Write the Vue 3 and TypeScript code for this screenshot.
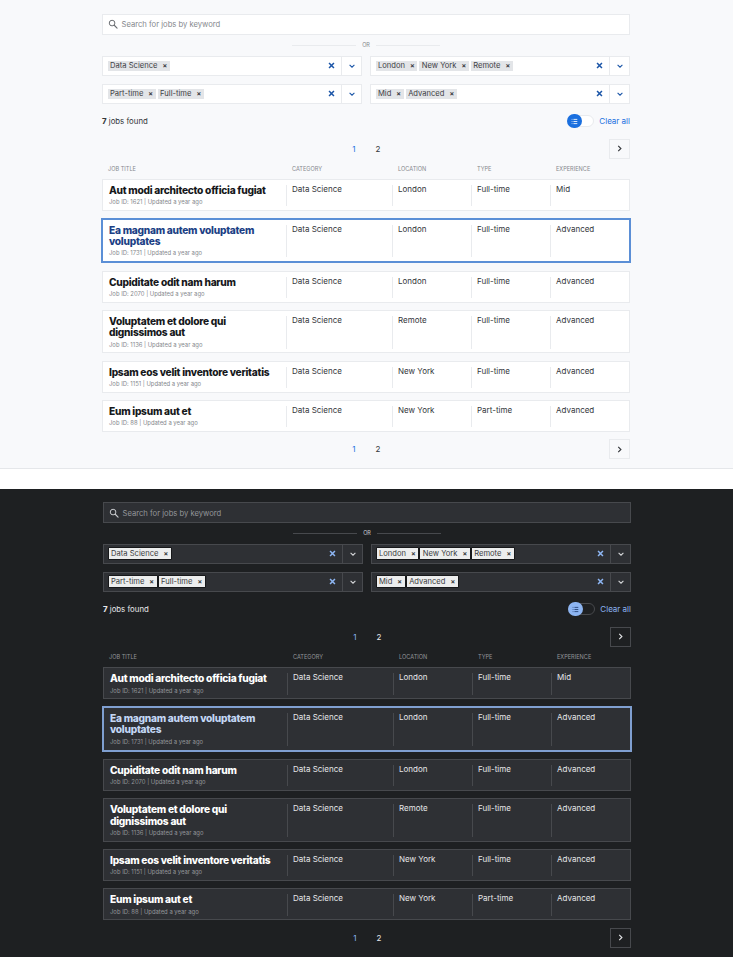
<script setup lang="ts">
interface Job {
  title: string
  id: number
  location: string
  type: string
  level: string
  selected?: boolean
}

const themes = ['light', 'dark']

const jobs: Job[] = [
  { title: 'Aut modi architecto officia fugiat', id: 1621, location: 'London', type: 'Full-time', level: 'Mid' },
  { title: 'Ea magnam autem voluptatem voluptates', id: 1731, location: 'London', type: 'Full-time', level: 'Advanced', selected: true },
  { title: 'Cupiditate odit nam harum', id: 2070, location: 'London', type: 'Full-time', level: 'Advanced' },
  { title: 'Voluptatem et dolore qui dignissimos aut', id: 1136, location: 'Remote', type: 'Full-time', level: 'Advanced' },
  { title: 'Ipsam eos velit inventore veritatis', id: 1151, location: 'New York', type: 'Full-time', level: 'Advanced' },
  { title: 'Eum ipsum aut et', id: 88, location: 'New York', type: 'Part-time', level: 'Advanced' },
]

const filters = [
  ['Data Science'],
  ['London', 'New York', 'Remote'],
  ['Part-time', 'Full-time'],
  ['Mid', 'Advanced'],
]
</script>

<template>
  <div class="page">
    <section v-for="theme in themes" :key="theme" class="panel" :class="theme">
      <div class="search">
        <svg class="search-icon" viewBox="0 0 16 16" width="10" height="10">
          <circle cx="6.5" cy="6.5" r="4.5" fill="none" stroke="currentColor" stroke-width="1.6" />
          <path d="M10 10l4.5 4.5" stroke="currentColor" stroke-width="1.8" stroke-linecap="round" />
        </svg>
        <span>Search for jobs by keyword</span>
      </div>

      <div class="or"><i></i><span>OR</span><i></i></div>

      <div class="filters">
        <div v-for="(tags, i) in filters" :key="i" class="select">
          <div class="tags">
            <span v-for="tag in tags" :key="tag" class="tag">{{ tag }}<b>×</b></span>
          </div>
          <svg class="clear" viewBox="0 0 10 10" width="7" height="7">
            <path d="M1.5 1.5l7 7M8.5 1.5l-7 7" stroke="currentColor" stroke-width="2.2" />
          </svg>
          <div class="caret">
            <svg viewBox="0 0 10 10" width="6" height="6">
              <path d="M1 3l4 4 4-4" fill="none" stroke="currentColor" stroke-width="1.8" />
            </svg>
          </div>
        </div>
      </div>

      <div class="summary">
        <span class="count"><strong>7</strong> jobs found</span>
        <div class="toggle">
          <span class="knob">
            <svg viewBox="0 0 10 10" width="7" height="7">
              <path d="M3.5 2h5.5M3.5 5h5.5M3.5 8h5.5" stroke="currentColor" stroke-width="1.2" />
              <path d="M1 2h1M1 5h1M1 8h1" stroke="currentColor" stroke-width="1.2" />
            </svg>
          </span>
        </div>
        <a class="clear-all">Clear all</a>
      </div>

      <div class="pager">
        <span class="num active">1</span>
        <span class="num">2</span>
        <button class="next">
          <svg viewBox="0 0 10 10" width="7" height="7">
            <path d="M3.2 1.2L7 5 3.2 8.8" fill="none" stroke="currentColor" stroke-width="1.6" />
          </svg>
        </button>
      </div>

      <div class="heads">
        <span>Job title</span>
        <span>Category</span>
        <span>Location</span>
        <span>Type</span>
        <span>Experience</span>
      </div>

      <div class="rows">
        <div v-for="job in jobs" :key="job.id" class="row" :class="{ selected: job.selected }">
          <div class="main">
            <h3>{{ job.title }}</h3>
            <p>Job ID: {{ job.id }} | Updated a year ago</p>
          </div>
          <div class="cell">Data Science</div>
          <div class="cell">{{ job.location }}</div>
          <div class="cell">{{ job.type }}</div>
          <div class="cell">{{ job.level }}</div>
        </div>
      </div>

      <div class="pager bottom">
        <span class="num active">1</span>
        <span class="num">2</span>
        <button class="next">
          <svg viewBox="0 0 10 10" width="7" height="7">
            <path d="M3.2 1.2L7 5 3.2 8.8" fill="none" stroke="currentColor" stroke-width="1.6" />
          </svg>
        </button>
      </div>
    </section>
  </div>
</template>

<style>
body {
  background: #fff;
}
</style>

<style scoped>
.page {
  width: 733px;
  height: 957px;
  overflow: hidden;
  font-family: Inter, "Open Sans", sans-serif;
}

.panel {
  box-sizing: border-box;
  height: 468.5px;
  padding: 14px 103px 0 102px;
  background: #f8f9fb;
  border-bottom: 1px solid #e5e7ea;
  color: #33363a;
  --box: #fff;
  --line: #e9ebee;
  --accent: #1a6fdf;
  --x: #1c56a8;
  --muted: #85888d;
  --title: #16181b;
  --sel-title: #1c3f85;
  --sel-border: #5b8fd6;
  --tag: #e3e5e8;
  --tag-text: #3e4145;
}

.panel.light {
  margin-bottom: 20px;
}

.panel.dark {
  padding: 13.5px 102px 0 103px;
  background: #1e2022;
  border-bottom: none;
  color: #e6e7e9;
  --box: #2e3034;
  --line: #47494d;
  --accent: #8db5f2;
  --x: #8db5f2;
  --muted: #94969a;
  --title: #fff;
  --sel-title: #c3d7f5;
  --sel-border: #7f9fd0;
  --tag: #eceded;
  --tag-text: #3a3c40;
}

.search {
  box-sizing: border-box;
  height: 20.5px;
  display: flex;
  align-items: center;
  gap: 4px;
  padding-left: 4.5px;
  background: var(--box);
  border: 1px solid var(--line);
  font-size: 7.65px;
  color: var(--muted);
}

.search-icon {
  color: #6b6e72;
}

.dark .search {
  height: 21px;
  padding-top: 1px;
}

.dark .search-icon {
  color: #c9cbce;
}

.or {
  height: 21px;
  display: flex;
  align-items: center;
  justify-content: center;
  gap: 6px;
  font-size: 5.5px;
  color: var(--muted);
}

.dark .or {
  height: 20.5px;
  color: #c9cbce;
}

.or i {
  width: 64px;
  height: 1px;
  background: var(--line);
}

.filters {
  display: grid;
  grid-template-columns: 260px 260px;
  justify-content: space-between;
  gap: 8px;
}

.select {
  box-sizing: border-box;
  height: 20px;
  display: flex;
  align-items: center;
  background: var(--box);
  border: 1px solid var(--line);
}

.tags {
  flex: 1;
  display: flex;
  gap: 2px;
  padding-left: 4.5px;
}

.tag {
  display: flex;
  align-items: center;
  height: 10px;
  padding: 0 2.5px;
  background: var(--tag);
  color: var(--tag-text);
  font-size: 7.6px;
  white-space: nowrap;
}

.tag b {
  margin-left: 5px;
  font-size: 7px;
  font-weight: 700;
}

.dark .tag {
  height: 11px;
  box-shadow: 0 0 0 0.5px #000;
}

.clear {
  color: var(--x);
  margin-right: 6px;
}

.caret {
  box-sizing: border-box;
  width: 20px;
  height: 100%;
  display: flex;
  align-items: center;
  justify-content: center;
  border-left: 1px solid var(--line);
  color: var(--x);
}

.dark .caret {
  color: #d5d6d8;
}

.summary {
  height: 15px;
  margin-top: 10px;
  display: flex;
  align-items: center;
  font-size: 7.8px;
}

.count {
  flex: 1;
}

.count strong {
  font-weight: 800;
}

.toggle {
  box-sizing: border-box;
  width: 27px;
  height: 12px;
  border: 1px solid var(--line);
  border-radius: 6px;
  display: flex;
  align-items: center;
  background: var(--box);
}

.dark .toggle {
  background: #1e2022;
}

.knob {
  flex: none;
  width: 14.5px;
  height: 14.5px;
  margin-left: -1px;
  border-radius: 50%;
  background: var(--accent);
  display: flex;
  align-items: center;
  justify-content: center;
  color: #fff;
}

.dark .knob {
  color: #1f3d70;
}

.clear-all {
  margin-left: 5px;
  color: var(--accent);
  font-size: 8px;
}

.pager {
  height: 20px;
  margin-top: 10px;
  display: flex;
  align-items: center;
  font-size: 8px;
}

.pager.bottom {
  margin-top: 7.6px;
}

.num {
  width: 24px;
  text-align: center;
}

.num:first-child {
  margin-left: 240px;
}

.num.active {
  color: var(--accent);
}

.next {
  margin-left: auto;
  box-sizing: border-box;
  width: 21px;
  height: 20px;
  padding: 0;
  display: flex;
  align-items: center;
  justify-content: center;
  background: transparent;
  border: 1px solid var(--line);
  color: inherit;
}

.heads,
.row {
  display: grid;
  grid-template-columns: 183px 106px 79px 79px 1fr;
}

.heads {
  grid-template-columns: 184px 106px 79px 79px 1fr;
  height: 20.5px;
  padding-top: 0.5px;
  box-sizing: border-box;
  align-items: center;
  font-size: 5.6px;
  text-transform: uppercase;
  color: var(--muted);
}

.dark .heads {
  height: 20.9px;
  padding-top: 1px;
}

.heads span {
  padding-left: 6px;
}

.rows {
  display: flex;
  flex-direction: column;
  gap: 7.3px;
}

.row {
  box-sizing: border-box;
  padding: 5px 0 3.7px;
  background: var(--box);
  border: 1px solid var(--line);
}

.row.selected {
  margin: -0.5px -1px 0;
  padding: 5px 0 4px;
  border: 2px solid var(--sel-border);
}

.main {
  padding-left: 6px;
  padding-right: 4px;
}

h3 {
  margin: 0;
  font-size: 10.2px;
  line-height: 11.3px;
  font-weight: 800;
  letter-spacing: -0.27px;
  color: var(--title);
}

.selected h3 {
  color: var(--sel-title);
}

p {
  margin: 2px 0 0;
  font-size: 5.9px;
  line-height: 8px;
  color: var(--muted);
}

.cell {
  padding-left: 5px;
  border-left: 1px solid var(--line);
  font-size: 8px;
  line-height: 8px;
}

.selected .main {
  padding-right: 30px;
}
</style>
